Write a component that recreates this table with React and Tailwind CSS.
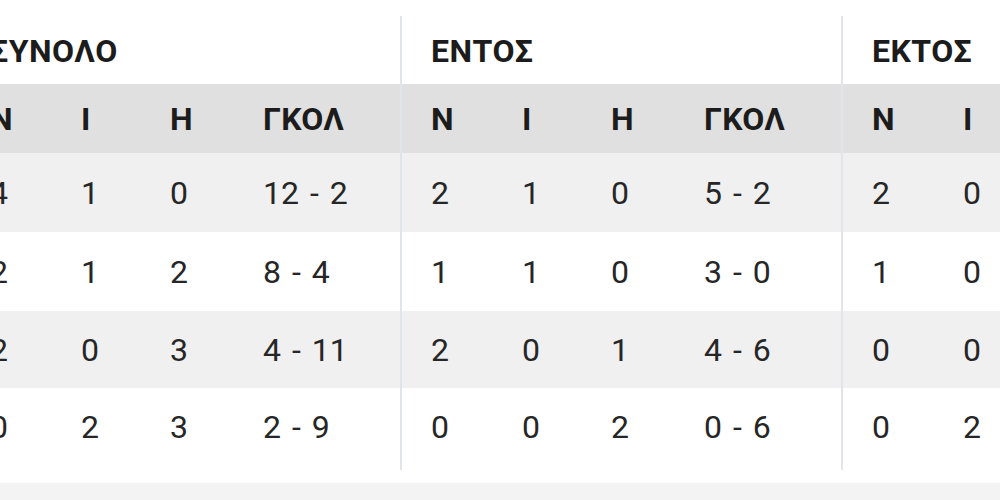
const groups = ["ΣΥΝΟΛΟ", "ΕΝΤΟΣ", "ΕΚΤΟΣ"];
const cols = ["Ν", "Ι", "Η", "ΓΚΟΛ"];
const widths = ["w-[91px]", "w-[89px]", "w-[93px]", "w-[168px]"];

const rows = [
  { h: "h-[79px]", bg: "bg-[#f0f0f0]", data: [["4", "1", "0", "12 - 2"], ["2", "1", "0", "5 - 2"], ["2", "0", "1", "7 - 0"]] },
  { h: "h-[79px]", bg: "bg-white", data: [["2", "1", "2", "8 - 4"], ["1", "1", "0", "3 - 0"], ["1", "0", "2", "5 - 4"]] },
  { h: "h-[77px]", bg: "bg-[#f0f0f0]", data: [["2", "0", "3", "4 - 11"], ["2", "0", "1", "4 - 6"], ["0", "0", "2", "0 - 5"]] },
  { h: "h-[78px]", bg: "bg-white", data: [["0", "2", "3", "2 - 9"], ["0", "0", "2", "0 - 6"], ["0", "2", "1", "2 - 3"]] },
];

function Cells({ values, bold }) {
  return (
    <div className="flex w-[441px] shrink-0">
      {values.map((v, i) => (
        <div
          key={i}
          className={`${widths[i]} shrink-0 pl-[30px] whitespace-nowrap ${
            bold ? "font-bold text-[#1c1c1c]" : "text-[#262626] [word-spacing:3px]"
          }`}
        >
          {v}
        </div>
      ))}
    </div>
  );
}

export default function App() {
  return (
    <div className="relative w-[1000px] h-[500px] overflow-hidden bg-white font-['Roboto',sans-serif] text-[32px] leading-none">
      <div className="-ml-[40px] w-[1323px] flex flex-col">
        {/* group titles */}
        <div className="flex h-[84px] pt-[17px] items-center">
          {groups.map((g) => (
            <div key={g} className="w-[441px] shrink-0 pl-[30px] font-bold text-[#1c1c1c] tracking-[0.5px]">
              {g}
            </div>
          ))}
        </div>

        {/* column headers */}
        <div className="flex h-[69px] items-center bg-[#e0e0e0] tracking-[0.3px]">
          {groups.map((g) => (
            <Cells key={g} values={cols} bold />
          ))}
        </div>

        {rows.map((r, i) => (
          <div key={i} className={`flex items-center ${r.h} ${r.bg}`}>
            {r.data.map((d, j) => (
              <Cells key={j} values={d} />
            ))}
          </div>
        ))}

        <div className="h-[17px] bg-white" />
        <div className="h-[17px] bg-[#f3f3f3]" />
      </div>

      {/* group dividers */}
      <div className="absolute left-[400px] top-[16px] w-[2px] h-[454px] bg-[#e1e5ea]" />
      <div className="absolute left-[841px] top-[16px] w-[2px] h-[454px] bg-[#e1e5ea]" />
    </div>
  );
}
